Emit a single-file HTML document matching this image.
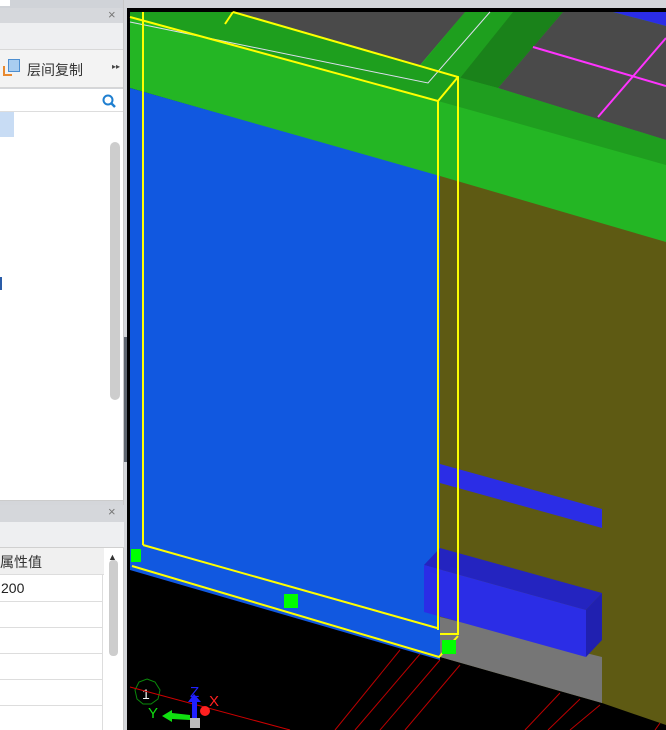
<!DOCTYPE html>
<html><head><meta charset="utf-8"><style>
*{margin:0;padding:0;box-sizing:border-box}
body{width:666px;height:730px;overflow:hidden;background:#d4d6da;font-family:"Liberation Sans","Noto Sans CJK SC",sans-serif;position:relative}
.a{position:absolute}
</style></head><body>
<div class="a" style="left:0;top:0;width:124px;height:8px;background:#d0d3d8"></div>
<div class="a" style="left:0;top:0;width:10px;height:6px;background:#fff"></div>
<div class="a" style="left:0;top:8px;width:124px;height:15px;background:#d6d8dc"></div>
<div class="a" style="left:108px;top:7px;font-size:13px;color:#777">×</div>
<div class="a" style="left:0;top:23px;width:124px;height:27px;background:#eeeff1;border-bottom:1px solid #d8d8d8"></div>
<div class="a" style="left:0;top:50px;width:124px;height:38px;background:#f3f3f3;border-bottom:1px solid #d6d6d6"></div>
<div class="a" style="left:3px;top:66px;width:9px;height:10px;border-left:2px solid #e8892f;border-bottom:2px solid #e8892f"></div>
<div class="a" style="left:8px;top:59px;width:12px;height:13px;background:#a9cdf0;border:1px solid #4d8ed0"></div>
<div class="a" style="left:27px;top:60px;font-size:14px;color:#333">层间复制</div>
<div class="a" style="left:112px;top:62px;font-size:8px;color:#444">▸▸</div>
<div class="a" style="left:0;top:89px;width:123px;height:23px;background:#fff;border-bottom:1px solid #ddd"></div>
<svg class="a" style="left:101px;top:93px" width="16" height="16"><circle cx="7" cy="7" r="4.5" fill="none" stroke="#1f7fd0" stroke-width="2"/><line x1="10" y1="10" x2="14" y2="14" stroke="#1f7fd0" stroke-width="2.5"/></svg>
<div class="a" style="left:0;top:112px;width:123px;height:389px;background:#fff;border-bottom:1px solid #ccc"></div>
<div class="a" style="left:0;top:112px;width:14px;height:25px;background:#c8dcf4"></div>
<div class="a" style="left:0;top:277px;width:2px;height:13px;background:#2a5ca8"></div>
<div class="a" style="left:110px;top:142px;width:10px;height:258px;background:#cdcdcd;border-radius:5px"></div>
<div class="a" style="left:123px;top:0;width:1px;height:730px;background:#c8c8c8"></div>
<div class="a" style="left:124px;top:337px;width:4px;height:125px;background:#5f6670"></div>
<div class="a" style="left:0;top:505px;width:124px;height:17px;background:#d5d7db"></div>
<div class="a" style="left:108px;top:504px;font-size:13px;color:#777">×</div>
<div class="a" style="left:0;top:522px;width:124px;height:26px;background:#eeeff1;border-bottom:1px solid #d0d0d0"></div>
<div class="a" style="left:0;top:548px;width:104px;height:182px;background:#fff"></div>
<div class="a" style="left:0;top:548px;width:104px;height:27px;background:#f0f0f0;border-bottom:1px solid #ddd"></div>
<div class="a" style="left:0;top:552px;font-size:14px;color:#333">属性值</div>
<div class="a" style="left:1px;top:580px;font-size:14px;color:#222">200</div>
<div class="a" style="left:0;top:601px;width:102px;height:1px;background:#ddd"></div>
<div class="a" style="left:0;top:627px;width:102px;height:1px;background:#ddd"></div>
<div class="a" style="left:0;top:653px;width:102px;height:1px;background:#ddd"></div>
<div class="a" style="left:0;top:679px;width:102px;height:1px;background:#ddd"></div>
<div class="a" style="left:0;top:705px;width:102px;height:1px;background:#ddd"></div>
<div class="a" style="left:102px;top:575px;width:1px;height:155px;background:#ddd"></div>
<div class="a" style="left:104px;top:548px;width:19px;height:182px;background:#fff"></div>
<div class="a" style="left:108px;top:552px;font-size:9px;color:#333">▲</div>
<div class="a" style="left:109px;top:560px;width:9px;height:96px;background:#cdcdcd;border-radius:4px"></div>
<svg class="a" style="left:127px;top:8px" width="539" height="722" viewBox="127 8 539 722">
<rect x="127" y="8" width="539" height="722" fill="#000"/>
<polygon points="130,12 666,12 666,245 440,177 130,88" fill="#24b624"/>
<polygon points="130,12 233,12 458,77 438,101 130,16" fill="#1e9f1e"/>
<polygon points="465,12 513,12 460,78 458,77 420,66" fill="#1e9f1e"/>
<polygon points="513,12 563,12 498,88 460,78" fill="#1a821a"/>
<polygon points="237,12 465,12 420,65" fill="#4a4a4a"/>
<polygon points="563,12 613,12 666,26 666,140 498,88" fill="#4a4a4a"/>
<polygon points="613,12 666,12 666,26" fill="#2b2de6"/>
<polygon points="458,77 498,88 666,140 666,165 438,101" fill="#1f9e1f"/>
<line x1="533" y1="47" x2="666" y2="86" stroke="#ff33ff" stroke-width="2"/>
<line x1="666" y1="38" x2="598" y2="117" stroke="#ff33ff" stroke-width="2"/>
<polyline points="130,22 428,83 490,12" fill="none" stroke="#dde" stroke-width="1"/>
<polygon points="130,88 440,176 440,660 130,570" fill="#1158e0"/>
<polygon points="440,176 666,242 666,725 602,703 440,657" fill="#5e5a13"/>
<polygon points="440,617 602,657 602,703 440,657" fill="#767676"/>
<polygon points="440,464 602,509 602,528 440,483" fill="#2b2de6"/>
<polygon points="424,565 440,548 602,593 586,610" fill="#2424c0"/>
<polygon points="424,565 586,610 586,657 424,612" fill="#2b2de6"/>
<polygon points="586,610 602,593 602,640 586,657" fill="#2020b0"/>
<g stroke="#b00" stroke-width="1">
<line x1="440" y1="660" x2="380" y2="730"/><line x1="420" y1="654" x2="355" y2="730"/>
<line x1="460" y1="665" x2="405" y2="730"/><line x1="400" y1="650" x2="335" y2="730"/>
<line x1="560" y1="693" x2="525" y2="730"/><line x1="580" y1="699" x2="548" y2="730"/><line x1="600" y1="705" x2="570" y2="730"/>
<line x1="660" y1="723" x2="655" y2="730"/>
</g>
<g stroke="#ffff00" stroke-width="2" fill="none">
<line x1="143" y1="12" x2="143" y2="545"/>
<polyline points="130,17 438,101 438,630"/>
<polyline points="233,12 458,77 458,634 440,634"/>
<line x1="438" y1="101" x2="458" y2="77"/>
<line x1="233" y1="12" x2="225" y2="24"/>
<polyline points="143,545 437,628"/>
<polyline points="132,566 439,657 458,636"/>
</g>
<rect x="131" y="549" width="10" height="13" fill="#00ff00"/>
<rect x="284" y="594" width="14" height="14" fill="#00ff00"/>
<rect x="442" y="640" width="14" height="14" fill="#00ff00"/>
<polygon points="147,679 155,682 160,690 158,699 151,704 143,704 137,699 135,690 139,682" fill="none" stroke="#0a8a0a" stroke-width="1"/>
<text x="142" y="699" font-size="14" fill="#eee" font-family="Liberation Sans">1</text>
<line x1="130" y1="687" x2="290" y2="730" stroke="#c00" stroke-width="1"/>
<text x="190" y="697" font-size="15" fill="#2020ff" font-family="Liberation Sans">Z</text>
<rect x="192" y="700" width="5" height="18" fill="#2020ff"/><polygon points="188,702 194,694 201,702" fill="#2020ff"/>
<text x="209" y="706" font-size="15" fill="#ff2020" font-family="Liberation Sans">X</text>
<circle cx="205" cy="711" r="5" fill="#ff2020"/>
<text x="148" y="718" font-size="15" fill="#10e010" font-family="Liberation Sans">Y</text>
<polygon points="162,716 172,710 172,713 190,715 190,720 172,719 172,722" fill="#10e010"/>
<rect x="190" y="718" width="10" height="10" fill="#bbb"/>
</svg>
</body></html>
